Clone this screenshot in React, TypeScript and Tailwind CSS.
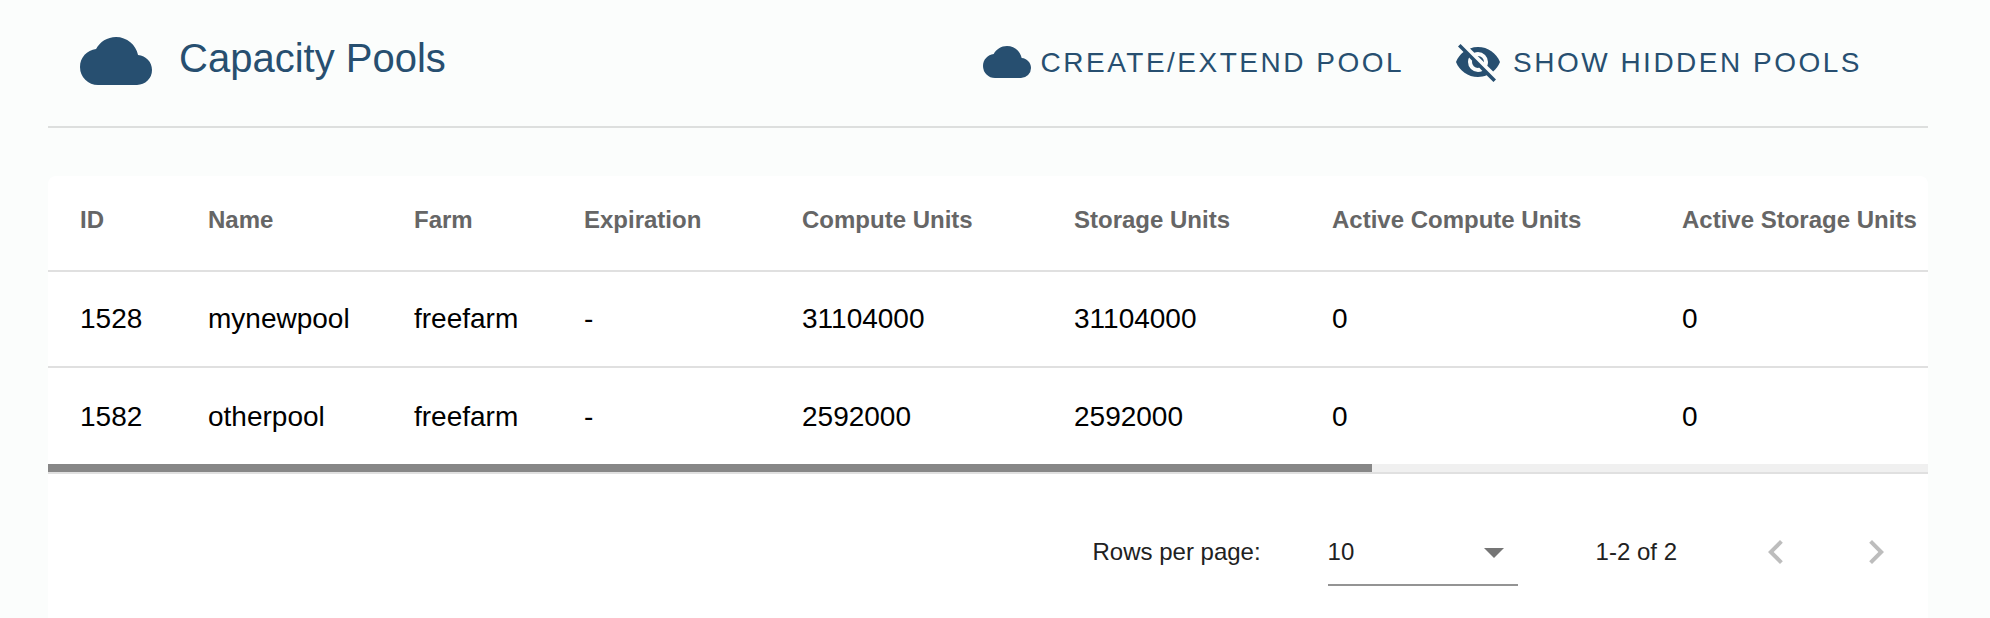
import React from "react";

const CLOUD =
  "M19.35,10.03C18.67,6.59 15.64,4 12,4C9.11,4 6.6,5.64 5.35,8.03C2.34,8.36 0,10.9 0,14A6,6 0 0,0 6,20H19A5,5 0 0,0 24,15C24,12.36 21.95,10.22 19.35,10.03Z";
const EYE_OFF =
  "M11.83,9L15,12.16C15,12.11 15,12.05 15,12A3,3 0 0,0 12,9C11.94,9 11.89,9 11.83,9M7.53,9.8L9.08,11.35C9.03,11.56 9,11.77 9,12A3,3 0 0,0 12,15C12.22,15 12.44,14.97 12.65,14.92L14.2,16.47C13.53,16.8 12.79,17 12,17A5,5 0 0,1 7,12C7,11.21 7.2,10.47 7.53,9.8M2,4.27L4.28,6.55L4.73,7C3.08,8.3 1.78,10 1,12C2.73,16.39 7,19.5 12,19.5C13.55,19.5 15.03,19.2 16.38,18.66L16.81,19.08L19.73,22L21,20.73L3.27,3M12,7A5,5 0 0,1 17,12C17,12.64 16.87,13.26 16.64,13.82L19.57,16.75C21.07,15.5 22.27,13.86 23,12C21.27,7.61 17,4.5 12,4.5C10.6,4.5 9.26,4.75 8,5.2L10.17,7.35C10.74,7.13 11.35,7 12,7Z";
const MENU_DOWN = "M7,10L12,15L17,10H7Z";
const CHEVRON_LEFT = "M15.41,16.58L10.83,12L15.41,7.41L14,6L8,12L14,18L15.41,16.58Z";
const CHEVRON_RIGHT = "M8.59,16.58L13.17,12L8.59,7.41L10,6L16,12L10,18L8.59,16.58Z";

function Icon({ path, className }: { path: string; className: string }) {
  return (
    <svg viewBox="0 0 24 24" fill="currentColor" className={`block shrink-0 ${className}`} aria-hidden="true">
      <path d={path} />
    </svg>
  );
}

const columns = [
  "ID",
  "Name",
  "Farm",
  "Expiration",
  "Compute Units",
  "Storage Units",
  "Active Compute Units",
  "Active Storage Units",
];

const pools = [
  ["1528", "mynewpool", "freefarm", "-", "31104000", "31104000", "0", "0"],
  ["1582", "otherpool", "freefarm", "-", "2592000", "2592000", "0", "0"],
];

const rowGrid =
  "grid w-[2670px] grid-cols-[128px_206px_170px_218px_272px_258px_350px_1068px] whitespace-nowrap";

export default function App() {
  return (
    <div className="flex h-[618px] w-full flex-col overflow-hidden bg-[#fbfdfc] px-12 font-['Liberation_Sans',Arial,sans-serif]">
      <header className="flex h-32 w-[1880px] shrink-0 items-start border-b-2 border-[#dddfde] text-[#274f70]">
        <Icon path={CLOUD} className="ml-8 mt-[25px] size-[72px]" />
        <h1 className="ml-[27px] mt-[34px] text-[40px] leading-[48px]">Capacity Pools</h1>
        <button className="ml-auto mt-[38px] flex h-12 items-center text-[28px] tracking-[2.5px]">
          <Icon path={CLOUD} className="mr-[10px] size-12" />
          <span className="pt-0.5">CREATE/EXTEND POOL</span>
        </button>
        <button className="ml-[50px] mr-[66px] mt-[38px] flex h-12 items-center text-[28px] tracking-[2.5px]">
          <Icon path={EYE_OFF} className="mr-[11px] size-12" />
          <span className="pt-0.5">SHOW HIDDEN POOLS</span>
        </button>
      </header>

      <main className="mt-12 flex w-[1880px] grow flex-col rounded-t-lg bg-white">
        <div className="overflow-hidden">
          <div className={`${rowGrid} h-24 border-b-2 border-[#e0e0e0] text-2xl font-bold leading-[88px] text-[#666666]`}>
            {columns.map((label) => (
              <div key={label} className="px-8">
                {label}
              </div>
            ))}
          </div>
          {pools.map((row, i) => (
            <div
              key={row[0]}
              className={`${rowGrid} h-24 text-[28px] leading-[94px] text-black ${i === 0 ? "border-b-2 border-[#e0e0e0]" : "pt-0.5"}`}
            >
              {row.map((cell, j) => (
                <div key={j} className="px-8">
                  {cell}
                </div>
              ))}
            </div>
          ))}
        </div>
        <div className="h-2 bg-[#f0f0f0]">
          <div className="h-2 w-[1324px] bg-[#878787]" />
        </div>
        <footer className="flex h-[144px] items-start border-t-2 border-[#e0e0e0] text-2xl leading-[48px] text-[#212121]">
          <span className="ml-auto mt-[54px]">Rows per page:</span>
          <div className="ml-[67px] mt-[54px] flex h-[58px] w-[190px] items-start justify-between border-b-2 border-[#949494]">
            <span>10</span>
            <Icon path={MENU_DOWN} className="size-12 text-[#757575]" />
          </div>
          <span className="ml-[78px] mt-[54px]">1-2 of 2</span>
          <button className="ml-[75px] mt-[54px] text-[#bdbdbd]">
            <Icon path={CHEVRON_LEFT} className="size-12" />
          </button>
          <button className="ml-[52px] mr-7 mt-[54px] text-[#bdbdbd]">
            <Icon path={CHEVRON_RIGHT} className="size-12" />
          </button>
        </footer>
      </main>
    </div>
  );
}
